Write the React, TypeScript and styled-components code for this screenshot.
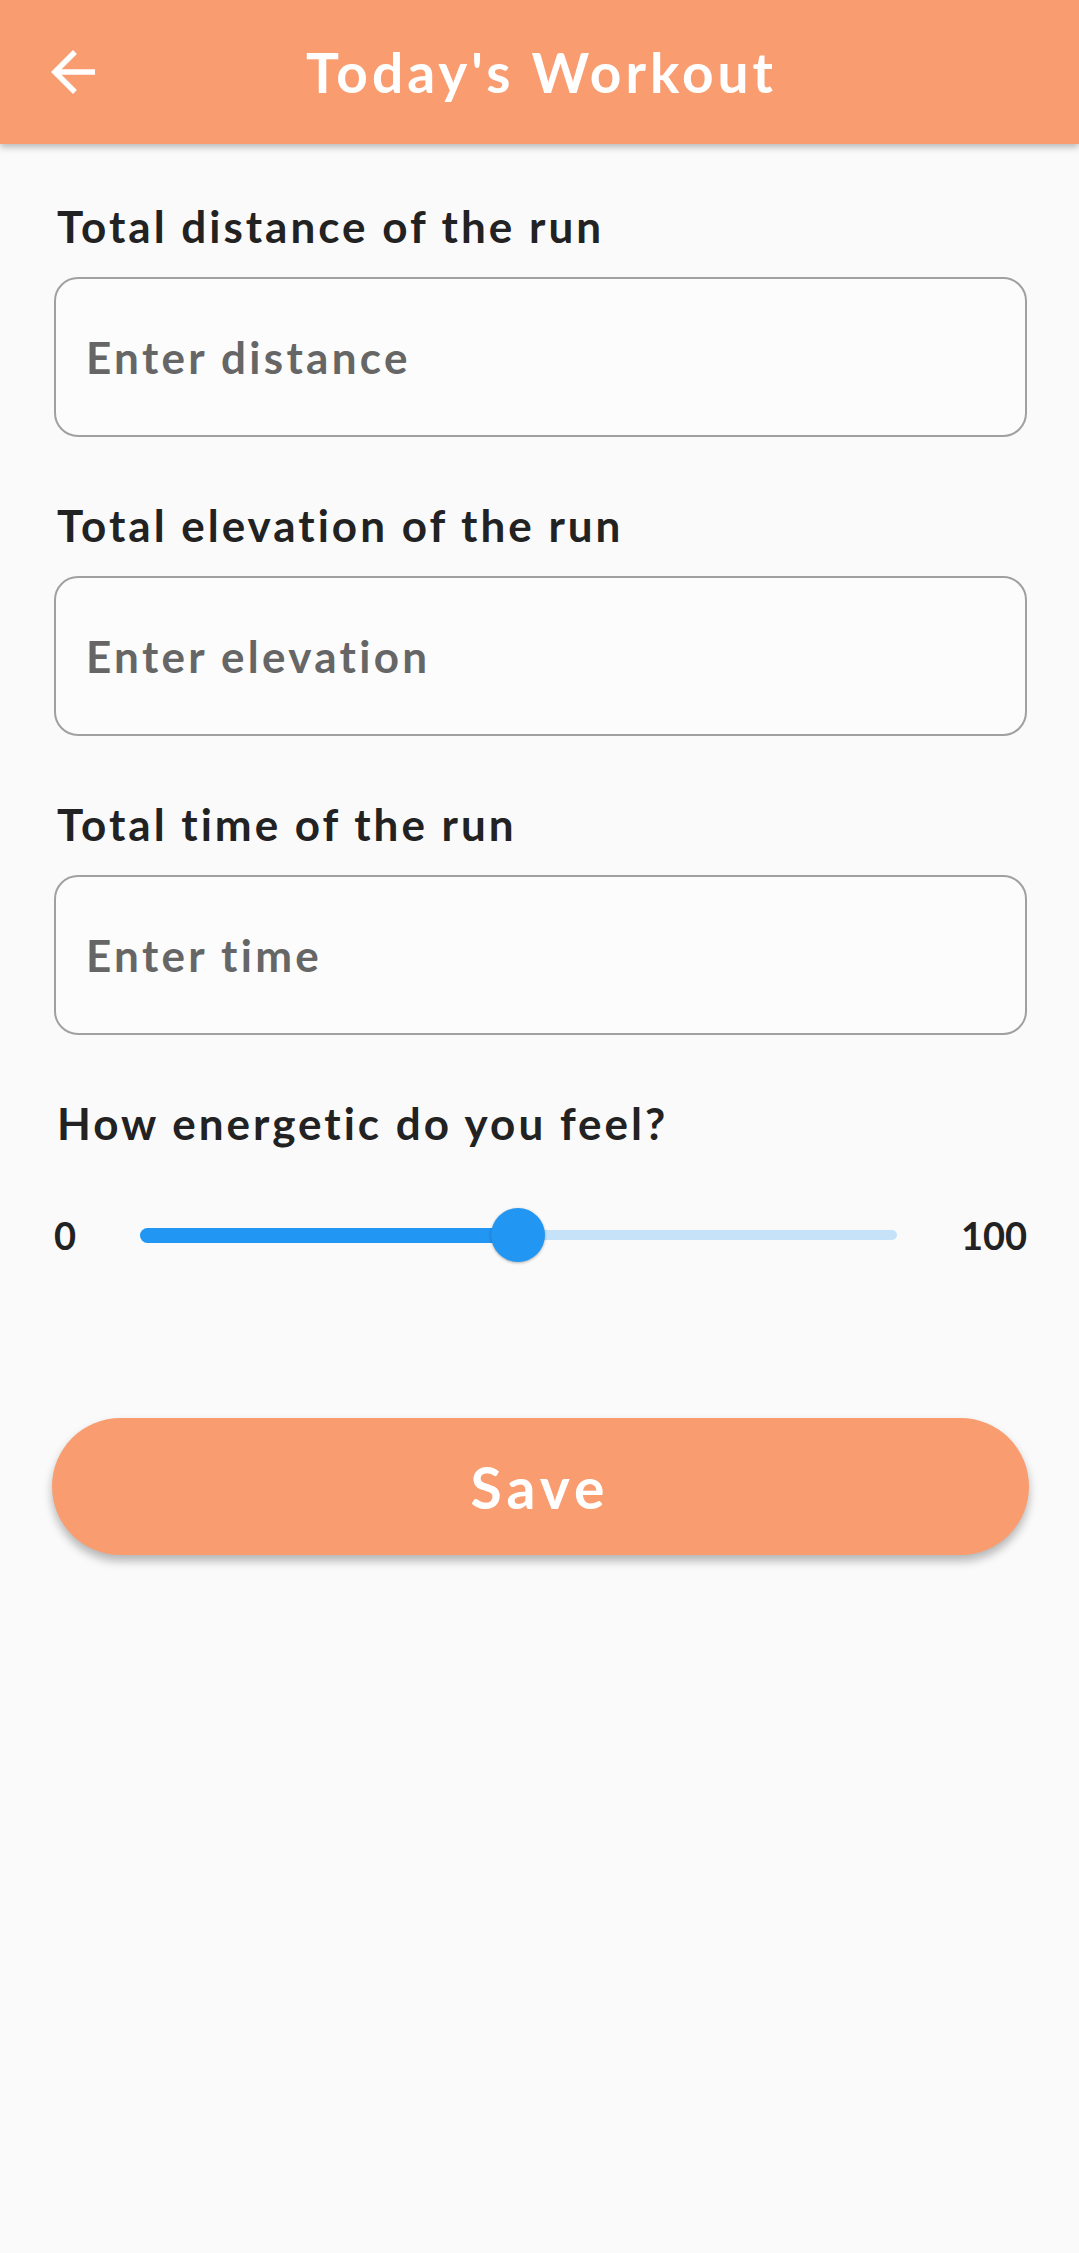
import React from "react";
import styled, { createGlobalStyle } from "styled-components";

const GlobalStyle = createGlobalStyle`
  html, body {
    margin: 0;
    padding: 0;
    background: #fafafa;
  }
  body {
    font-family: Lato, "Open Sans", "Liberation Sans", sans-serif;
    -webkit-font-smoothing: antialiased;
  }
  * { box-sizing: border-box; }
`;

const Page = styled.div`
  min-height: 2253px;
  background: #fafafa;
`;

const AppBar = styled.header`
  height: 144px;
  background: #f99d71;
  box-shadow: 0 3px 7px rgba(0, 0, 0, 0.28);
  display: grid;
  grid-template-columns: 1fr auto 1fr;
  align-items: center;
  position: relative;
  z-index: 1;
`;

const BackButton = styled.button`
  justify-self: start;
  margin-left: 40px;
  width: 66px;
  height: 66px;
  padding: 0;
  border: none;
  background: transparent;
  display: flex;
  align-items: center;
  justify-content: center;
  color: #fff;
`;

const Title = styled.h1`
  margin: 0 0 0 4px;
  font-size: 55px;
  font-weight: 700;
  color: #fff;
  letter-spacing: 4px;
`;

const Content = styled.main`
  padding: 56px 52px 0 54px;
  display: flex;
  flex-direction: column;
`;

const FieldGroup = styled.div`
  display: flex;
  flex-direction: column;
  gap: 24px;
  margin-bottom: 62px;
`;

const Label = styled.label`
  font-size: 44px;
  line-height: 53px;
  font-weight: 700;
  color: #222;
  padding-left: 3px;
  letter-spacing: 3px;
`;

const Input = styled.input`
  height: 160px;
  width: 100%;
  border: 2.5px solid #a0a0a0;
  border-radius: 24px;
  background: #fcfcfc;
  padding: 0 30px;
  font-family: inherit;
  font-size: 44px;
  font-weight: 700;
  letter-spacing: 3.3px;
  color: #222;
  outline: none;
  &::placeholder {
    color: #666;
    opacity: 1;
  }
`;

const SliderRow = styled.div`
  margin-top: 52px;
  height: 66px;
  display: flex;
  align-items: center;
  gap: 64px;
`;

const RangeLabel = styled.span`
  font-size: 38px;
  font-weight: 700;
  color: #222;
`;

const Track = styled.div`
  flex: 1;
  height: 66px;
  position: relative;
  display: flex;
  align-items: center;
`;

const Inactive = styled.div`
  position: absolute;
  left: 0;
  right: 0;
  height: 10px;
  border-radius: 5px;
  background: #c6e2f9;
`;

const Active = styled.div<{ $pct: number }>`
  position: absolute;
  left: 0;
  width: ${(p) => p.$pct}%;
  height: 15px;
  border-radius: 8px;
  background: #2196f3;
`;

const Thumb = styled.div<{ $pct: number }>`
  position: absolute;
  left: ${(p) => p.$pct}%;
  top: 50%;
  width: 54px;
  height: 54px;
  margin-left: -27px;
  margin-top: -27px;
  border-radius: 50%;
  background: #2196f3;
  box-shadow: 0 1px 3px rgba(0, 0, 0, 0.3);
`;

const SaveButton = styled.button`
  margin-top: 150px;
  margin-left: -2px;
  margin-right: -2px;
  height: 137px;
  border: none;
  border-radius: 69px;
  background: #f99d71;
  color: #fff;
  font-family: inherit;
  font-size: 57px;
  font-weight: 700;
  letter-spacing: 5px;
  padding-left: 5px;
  box-shadow: 0 6px 10px rgba(0, 0, 0, 0.28);
`;

const BackIcon = () => (
  <svg width="66" height="66" viewBox="0 0 24 24" fill="currentColor">
    <path d="M20 11H7.83l5.59-5.59L12 4l-8 8 8 8 1.41-1.41L7.83 13H20v-2z" />
  </svg>
);

const fields = [
  { label: "Total distance of the run", placeholder: "Enter distance" },
  { label: "Total elevation of the run", placeholder: "Enter elevation" },
  { label: "Total time of the run", placeholder: "Enter time" },
];

export default function App() {
  const value = 50;
  return (
    <Page>
      <GlobalStyle />
      <AppBar>
        <BackButton aria-label="Back">
          <BackIcon />
        </BackButton>
        <Title>Today's Workout</Title>
        <span />
      </AppBar>
      <Content>
        {fields.map((f) => (
          <FieldGroup key={f.label}>
            <Label>{f.label}</Label>
            <Input placeholder={f.placeholder} />
          </FieldGroup>
        ))}
        <Label>How energetic do you feel?</Label>
        <SliderRow>
          <RangeLabel>0</RangeLabel>
          <Track>
            <Inactive />
            <Active $pct={value} />
            <Thumb $pct={value} />
          </Track>
          <RangeLabel>100</RangeLabel>
        </SliderRow>
        <SaveButton>Save</SaveButton>
      </Content>
    </Page>
  );
}
